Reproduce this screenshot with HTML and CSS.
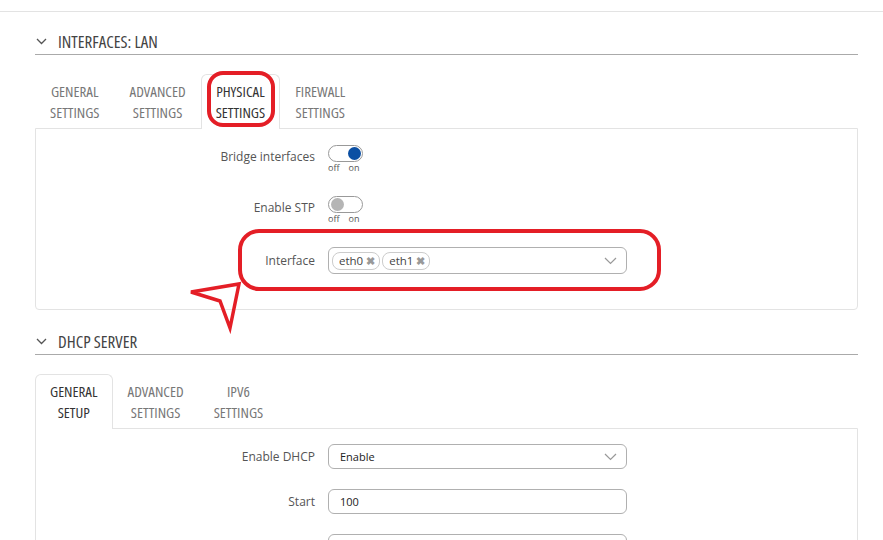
FILE: index.html
```html
<!DOCTYPE html>
<html lang="en">
<head>
    <meta charset="UTF-8">
    <title>Interfaces: LAN</title>
    <link rel="stylesheet" href="styles.css">
</head>
<body>
    <div class="topbar"></div>

    <div class="section">
        <div class="section-head">
            <svg class="chevron" width="11" height="7" viewBox="0 0 11 7"><path d="M1 1l4.5 4.5L10 1" fill="none" stroke="#555" stroke-width="1.3"/></svg>
            <span>INTERFACES: LAN</span>
        </div>
        <div class="tabs">
            <div class="tab">GENERAL<br>SETTINGS</div>
            <div class="tab">ADVANCED<br>SETTINGS</div>
            <div class="tab active">PHYSICAL<br>SETTINGS</div>
            <div class="tab">FIREWALL<br>SETTINGS</div>
        </div>
        <div class="panel panel-lan">
            <div class="row row-toggle">
                <label class="field-label">Bridge interfaces</label>
                <div>
                    <div class="toggle on"><span class="knob"></span></div>
                    <div class="toggle-text"><span>off</span><span>on</span></div>
                </div>
            </div>
            <div class="row row-toggle">
                <label class="field-label">Enable STP</label>
                <div>
                    <div class="toggle"><span class="knob"></span></div>
                    <div class="toggle-text"><span>off</span><span>on</span></div>
                </div>
            </div>
            <div class="row">
                <label class="field-label">Interface</label>
                <div class="select multi">
                    <span class="chip">eth0 <b>&#x2716;</b></span>
                    <span class="chip">eth1 <b>&#x2716;</b></span>
                    <svg class="caret" width="13" height="8" viewBox="0 0 13 8"><path d="M1 1l5.5 5.5L12 1" fill="none" stroke="#999" stroke-width="1.2"/></svg>
                </div>
            </div>
        </div>
    </div>

    <div class="section">
        <div class="section-head">
            <svg class="chevron" width="11" height="7" viewBox="0 0 11 7"><path d="M1 1l4.5 4.5L10 1" fill="none" stroke="#555" stroke-width="1.3"/></svg>
            <span>DHCP SERVER</span>
        </div>
        <div class="tabs">
            <div class="tab active">GENERAL<br>SETUP</div>
            <div class="tab">ADVANCED<br>SETTINGS</div>
            <div class="tab">IPV6<br>SETTINGS</div>
        </div>
        <div class="panel panel-dhcp">
            <div class="row row-input">
                <label class="field-label">Enable DHCP</label>
                <div class="select">
                    <span class="value">Enable</span>
                    <svg class="caret" width="13" height="8" viewBox="0 0 13 8"><path d="M1 1l5.5 5.5L12 1" fill="none" stroke="#999" stroke-width="1.2"/></svg>
                </div>
            </div>
            <div class="row row-input">
                <label class="field-label">Start</label>
                <div class="select"><span class="value">100</span></div>
            </div>
            <div class="row row-input">
                <label class="field-label"></label>
                <div class="select"></div>
            </div>
        </div>
    </div>

    <!-- annotation marks drawn over the screenshot -->
    <svg class="marks" width="883" height="540" viewBox="0 0 883 540">
        <rect x="209" y="73" width="64" height="52" rx="14" fill="none" stroke="#e41e26" stroke-width="4"/>
        <rect x="240" y="231" width="419" height="58" rx="19" fill="none" stroke="#e41e26" stroke-width="4"/>
        <polygon points="191,292 239,284 230,328 220,301" fill="none" stroke="#e41e26" stroke-width="3.5"/>
    </svg>
</body>
</html>
```

FILE: styles.css
```css
body {
    margin: 0;
    font-family: "Open Sans", Arial, sans-serif;
    background-color: white;
    color: #333;
    position: relative;
}
.topbar {
    height: 11px;
    border-bottom: 1px solid #e3e3e3;
}
.section {
    margin: 0 25px 0 35px;
}
.section-head {
    display: flex;
    align-items: center;
    height: 26px;
    margin-top: 16px;
    border-bottom: 1px solid #aaa;
    font-family: "Open Sans", "Noto Sans", sans-serif;
    font-stretch: 75%;
    font-size: 17px;
    color: #444;
}
.section + .section .section-head {
    margin-top: 18px;
}
.chevron {
    margin: 1px 11px 0 1px;
}
.tabs {
    display: flex;
    margin-top: 19px;
}
.tab {
    padding: 6px 14px 5px;
    line-height: 21px;
    text-align: center;
    font-family: "Open Sans", "Noto Sans", sans-serif;
    font-stretch: 75%;
    font-size: 15px;
    color: #777;
    border: 1px solid transparent;
    border-bottom: none;
}
.tab.active {
    color: #333;
    border-color: #e3e3e3;
    border-radius: 6px 6px 0 0;
    background: white;
    margin-bottom: -1px;
    position: relative;
}
.panel {
    border: 1px solid #e3e3e3;
    border-radius: 0 0 4px 4px;
}
.panel-lan {
    padding: 16px 0 35px;
}
.panel-dhcp {
    padding: 15px 0 20px;
}
.row {
    display: grid;
    grid-template-columns: 279px 299px;
    column-gap: 13px;
    align-items: start;
    margin-bottom: 22px;
}
.row:last-child {
    margin-bottom: 0;
}
.row-input {
    margin-bottom: 20px;
}
.field-label {
    text-align: right;
    font-size: 12px;
    color: #555;
    line-height: 27px;
}
.row-toggle .field-label {
    line-height: 24px;
}
.row-input .field-label {
    line-height: 25px;
}
.toggle {
    width: 33px;
    height: 15px;
    border: 1px solid #999;
    border-radius: 9px;
    position: relative;
}
.knob {
    position: absolute;
    top: 1px;
    left: 2px;
    width: 13px;
    height: 13px;
    border-radius: 50%;
    background: #b5b5b5;
}
.toggle.on .knob {
    left: auto;
    right: 1px;
    background: #0b4fa3;
}
.toggle-text {
    font-size: 9px;
    color: #555;
    line-height: 12px;
}
.toggle-text span {
    margin-right: 9px;
}
.select {
    display: flex;
    align-items: center;
    height: 23px;
    border: 1px solid #b0b0b0;
    border-radius: 6px;
    padding: 0 11px;
    font-size: 11px;
    color: #222;
}
.select.multi {
    height: 25px;
    padding-left: 3px;
}
.select .value {
    flex: 1;
}
.caret {
    margin-left: auto;
    margin-right: -2px;
}
.chip {
    display: inline-flex;
    align-items: center;
    height: 16px;
    padding: 0 4px 0 6px;
    margin-right: 2px;
    border: 1px solid #ccc;
    border-radius: 8px;
    font-size: 11.5px;
    color: #444;
}
.chip b {
    margin-left: 3px;
    font-size: 11px;
    color: #999;
}
.marks {
    position: absolute;
    top: 0;
    left: 0;
    pointer-events: none;
}
```
